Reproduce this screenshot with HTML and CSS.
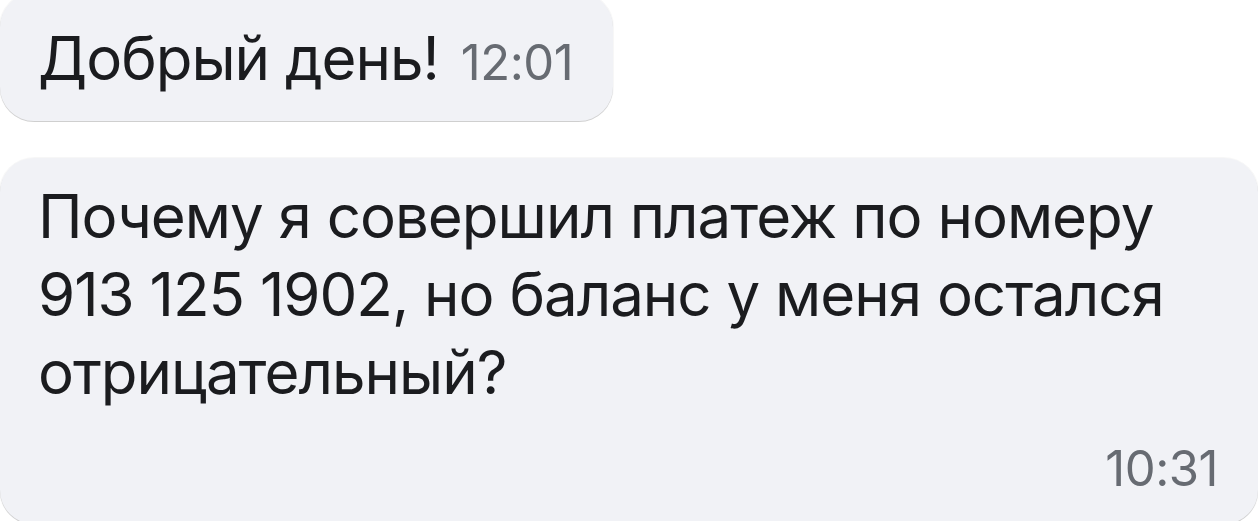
FILE: index.html
```html
<!DOCTYPE html>
<html lang="ru">
<head>
<meta charset="utf-8">
<title>Чат</title>
<link rel="stylesheet" href="styles.css">
</head>
<body>
<div class="chat">
  <div class="bubble bubble--short">
    <span class="text">Добрый день!</span>
    <span class="time">12:01</span>
  </div>
  <div class="bubble bubble--long">
    <p class="text">Почему я совершил платеж по номеру 913&nbsp;125&nbsp;1902, но баланс у меня остался отрицательный?</p>
    <span class="time">10:31</span>
  </div>
</div>
</body>
</html>
```
FILE: styles.css
```css
html, body {
  margin: 0;
  padding: 0;
  background: #ffffff;
}

body {
  width: 1258px;
  height: 521px;
  overflow: hidden;
  font-family: Inter, "Noto Sans", sans-serif;
  color: #1b1c1f;
}

.chat {
  display: flex;
  flex-direction: column;
  align-items: flex-start;
  gap: 37px;
  margin-top: -7px;
}

.bubble {
  background: #f1f2f6;
  border-radius: 34px;
  box-shadow: 0 0 0 1px rgba(0, 0, 0, 0.03), 0 1px 0 rgba(0, 0, 0, 0.16);
}

.text {
  font-size: 60px;
  line-height: 78px;
  letter-spacing: -1px;
  margin: 0;
}

.time {
  font-size: 49px;
  line-height: 1;
  color: #676b72;
  letter-spacing: -0.5px;
}

.bubble--short {
  display: flex;
  align-items: baseline;
  gap: 22px;
  padding: 26px 40px 24px 38px;
}

.bubble--long {
  align-self: stretch;
  display: flex;
  flex-direction: column;
  padding: 19px 40px 31px 38px;
}

.bubble--long .time {
  align-self: flex-end;
  margin-top: 33px;
}
```
